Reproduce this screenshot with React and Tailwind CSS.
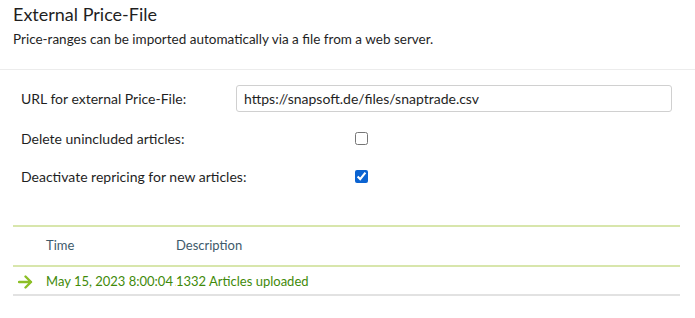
import { useState } from 'react';

const ArrowIcon = () => (
  <svg width="15" height="14" viewBox="0 0 15 14" fill="none">
    <path d="M1 7h12M7.5 1.5 13 7l-5.5 5.5" stroke="#8cbf26" strokeWidth="2.4" strokeLinecap="round" strokeLinejoin="round" />
  </svg>
);

const App = () => {
  const [url, setUrl] = useState('https://snapsoft.de/files/snaptrade.csv');
  const [deleteUnincluded, setDeleteUnincluded] = useState(false);
  const [deactivate, setDeactivate] = useState(true);

  return (
    <div className="w-[695px] h-[318px] bg-white text-[#1f1f1f] font-['Lato','Liberation_Sans',sans-serif]">
      {/* Header */}
      <div className="px-[13px] pt-[2px] h-[70px] border-b border-[#ececec]">
        <h1 className="text-[18px] leading-[24px]">External Price-File</h1>
        <p className="text-[13.5px] leading-[20px] mt-[3px]">
          Price-ranges can be imported automatically via a file from a web server.
        </p>
      </div>

      {/* Settings */}
      <div className="pl-[21px] pr-[23px] pt-[15px] text-[14px]">
        <div className="flex items-center h-[27px]">
          <label className="w-[215px]">URL for external Price-File:</label>
          <input
            type="text"
            value={url}
            onChange={(e) => setUrl(e.target.value)}
            className="flex-1 h-[27px] px-[7px] border border-[#d0d0d0] rounded-[3px] text-[14px] text-[#1f1f1f] focus:outline-none"
          />
        </div>
        <div className="flex items-center h-[38px] mt-[7px]">
          <label className="w-[334px]">Delete unincluded articles:</label>
          <input
            type="checkbox"
            checked={deleteUnincluded}
            onChange={(e) => setDeleteUnincluded(e.target.checked)}
            className="w-[13px] h-[13px]"
          />
        </div>
        <div className="flex items-center h-[38px]">
          <label className="w-[334px]">Deactivate repricing for new articles:</label>
          <input
            type="checkbox"
            checked={deactivate}
            onChange={(e) => setDeactivate(e.target.checked)}
            className="w-[13px] h-[13px] accent-[#0b63d1]"
          />
        </div>
      </div>

      {/* Log table */}
      <div className="ml-[13px] mr-[15px] mt-[30px] text-[13px]">
        <div className="flex items-center h-[42px] border-t-2 border-b-2 border-[#d8e6ac] text-[#3e5a6b]">
          <div className="w-[33px]" />
          <div className="w-[130px]">Time</div>
          <div>Description</div>
        </div>
        <div className="flex items-center h-[29px] pt-[2px] border-b-2 border-[#e2e2e2] text-[#3f8a0a]">
          <div className="w-[33px] pl-[5px] flex items-center">
            <ArrowIcon />
          </div>
          <div className="w-[130px] overflow-hidden whitespace-nowrap">May 15, 2023 8:00:04 AM</div>
          <div className="whitespace-nowrap">1332 Articles uploaded</div>
        </div>
      </div>
    </div>
  );
};

export default App;
